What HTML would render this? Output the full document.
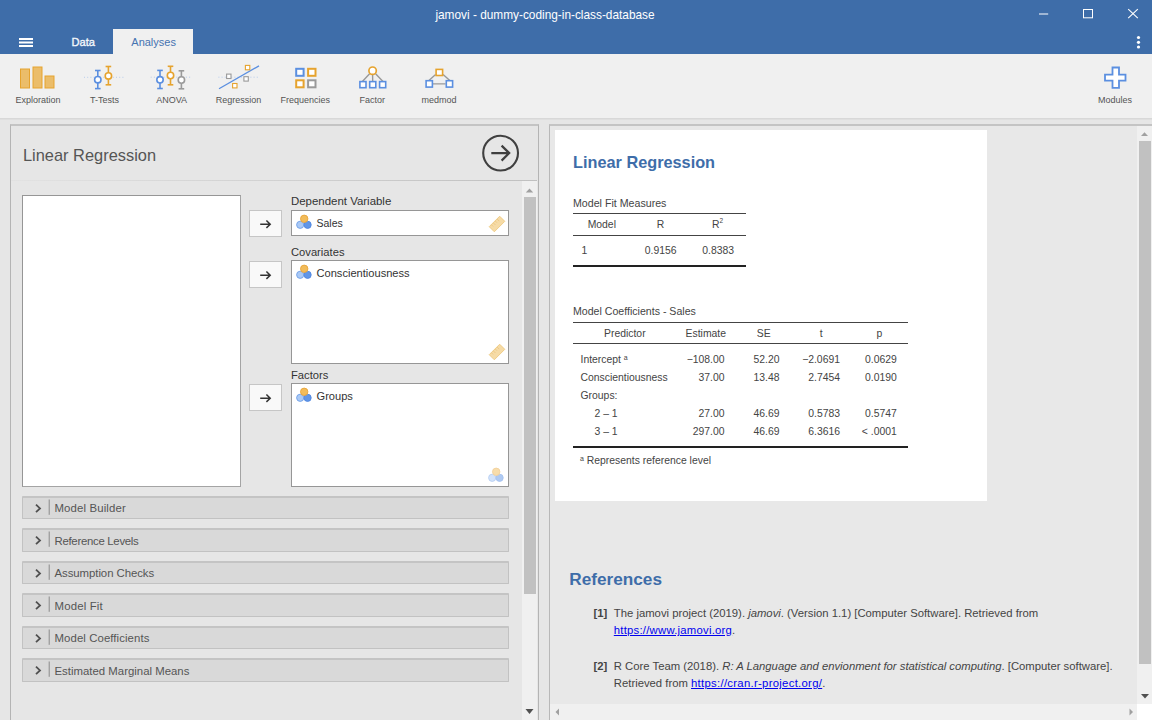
<!DOCTYPE html>
<html><head><meta charset="utf-8"><style>
html,body{margin:0;padding:0;width:1152px;height:720px;overflow:hidden;background:#e6e6e6;font-family:"Liberation Sans", sans-serif}
div,span,svg{position:absolute}
.t{white-space:nowrap;line-height:1}
sup{line-height:0}
</style></head><body>
<div style="left:0px;top:0px;width:1152px;height:54px;background:#3e6da9"></div>
<span class="t" style="left:545px;transform:translateX(-50%);top:9.67px;font-size:11.85px;color:#ffffff;font-weight:400;">jamovi - dummy-coding-in-class-database</span>
<svg style="position:absolute;left:0;top:0" width="1152" height="54"><line x1="1039" y1="14" x2="1048.2" y2="14" stroke="#fff" stroke-width="1"/><rect x="1083.5" y="9.5" width="9" height="8.3" fill="none" stroke="#fff" stroke-width="1"/><line x1="1128.2" y1="9.2" x2="1137.8" y2="18.2" stroke="#fff" stroke-width="1.1"/><line x1="1137.8" y1="9.2" x2="1128.2" y2="18.2" stroke="#fff" stroke-width="1.1"/><rect x="19" y="38" width="14" height="2" fill="#fff"/><rect x="19" y="41.5" width="14" height="2" fill="#fff"/><rect x="19" y="45" width="14" height="2" fill="#fff"/><circle cx="1138.5" cy="37.5" r="1.6" fill="#fff"/><circle cx="1138.5" cy="42.3" r="1.6" fill="#fff"/><circle cx="1138.5" cy="47" r="1.6" fill="#fff"/></svg>
<span class="t" style="left:71.5px;top:37.10px;font-size:11.1px;color:#f4f7fb;font-weight:400;-webkit-text-stroke:0.35px #f4f7fb">Data</span>
<div style="left:113px;top:29px;width:80px;height:25px;background:#f0f0f0"></div>
<span class="t" style="left:131.3px;top:37.19px;font-size:11.0px;color:#4673b0;font-weight:400;">Analyses</span>
<div style="left:0px;top:54px;width:1152px;height:64px;background:#f0f0f0"></div>
<span class="t" style="left:38px;transform:translateX(-50%);top:95.98px;font-size:9.0px;color:#555555;font-weight:400;">Exploration</span>
<span class="t" style="left:104.6px;transform:translateX(-50%);top:95.98px;font-size:9.0px;color:#555555;font-weight:400;">T-Tests</span>
<span class="t" style="left:171.6px;transform:translateX(-50%);top:95.98px;font-size:9.0px;color:#555555;font-weight:400;">ANOVA</span>
<span class="t" style="left:238.6px;transform:translateX(-50%);top:95.98px;font-size:9.0px;color:#555555;font-weight:400;">Regression</span>
<span class="t" style="left:305.3px;transform:translateX(-50%);top:95.98px;font-size:9.0px;color:#555555;font-weight:400;">Frequencies</span>
<span class="t" style="left:372.3px;transform:translateX(-50%);top:95.98px;font-size:9.0px;color:#555555;font-weight:400;">Factor</span>
<span class="t" style="left:439.1px;transform:translateX(-50%);top:95.98px;font-size:9.0px;color:#555555;font-weight:400;">medmod</span>
<span class="t" style="left:1115.1px;transform:translateX(-50%);top:95.98px;font-size:9.0px;color:#555555;font-weight:400;">Modules</span>
<svg style="position:absolute;left:0;top:54px" width="1152" height="64" viewBox="0 54 1152 64"><rect x="20.5" y="69" width="9.0" height="19" fill="#ebbd6a" stroke="#e6a32e" stroke-width="1"/><rect x="33" y="67" width="9" height="21" fill="#ebbd6a" stroke="#e6a32e" stroke-width="1"/><rect x="45" y="76" width="9" height="12" fill="#ebbd6a" stroke="#e6a32e" stroke-width="1"/><line x1="84" y1="77.3" x2="125" y2="77.3" stroke="#a9c3ea" stroke-width="0.8" stroke-dasharray="1 2.2"/><line x1="97.8" y1="70.5" x2="97.8" y2="88.6" stroke="#5b8fe0" stroke-width="1.6"/><line x1="95.0" y1="70.5" x2="100.6" y2="70.5" stroke="#5b8fe0" stroke-width="1.6"/><line x1="95.0" y1="88.6" x2="100.6" y2="88.6" stroke="#5b8fe0" stroke-width="1.6"/><circle cx="97.8" cy="79.7" r="3.2" fill="#fff" stroke="#5b8fe0" stroke-width="1.6"/><line x1="108.4" y1="66.5" x2="108.4" y2="84.8" stroke="#e6a32e" stroke-width="1.6"/><line x1="105.60000000000001" y1="66.5" x2="111.2" y2="66.5" stroke="#e6a32e" stroke-width="1.6"/><line x1="105.60000000000001" y1="84.8" x2="111.2" y2="84.8" stroke="#e6a32e" stroke-width="1.6"/><circle cx="108.4" cy="75.9" r="3.2" fill="#fff" stroke="#e6a32e" stroke-width="1.6"/><line x1="150.7" y1="77.2" x2="192" y2="77.2" stroke="#a9c3ea" stroke-width="0.8" stroke-dasharray="1 2.2"/><line x1="160" y1="70.4" x2="160" y2="88.5" stroke="#5b8fe0" stroke-width="1.6"/><line x1="157.2" y1="70.4" x2="162.8" y2="70.4" stroke="#5b8fe0" stroke-width="1.6"/><line x1="157.2" y1="88.5" x2="162.8" y2="88.5" stroke="#5b8fe0" stroke-width="1.6"/><circle cx="160" cy="79.8" r="3.2" fill="#fff" stroke="#5b8fe0" stroke-width="1.6"/><line x1="170.5" y1="66.3" x2="170.5" y2="84.8" stroke="#e6a32e" stroke-width="1.6"/><line x1="167.7" y1="66.3" x2="173.3" y2="66.3" stroke="#e6a32e" stroke-width="1.6"/><line x1="167.7" y1="84.8" x2="173.3" y2="84.8" stroke="#e6a32e" stroke-width="1.6"/><circle cx="170.5" cy="75.5" r="3.2" fill="#fff" stroke="#e6a32e" stroke-width="1.6"/><line x1="181.4" y1="70.8" x2="181.4" y2="88.8" stroke="#9a9a9a" stroke-width="1.6"/><line x1="178.6" y1="70.8" x2="184.20000000000002" y2="70.8" stroke="#9a9a9a" stroke-width="1.6"/><line x1="178.6" y1="88.8" x2="184.20000000000002" y2="88.8" stroke="#9a9a9a" stroke-width="1.6"/><circle cx="181.4" cy="80" r="3.2" fill="#fff" stroke="#9a9a9a" stroke-width="1.6"/><line x1="218.4" y1="77.2" x2="259.6" y2="77.2" stroke="#a9c3ea" stroke-width="0.8" stroke-dasharray="1 2.2"/><line x1="219" y1="88.7" x2="259" y2="65.9" stroke="#5b8fe0" stroke-width="1.3"/><rect x="245.4" y="65.39999999999999" width="4.4" height="4.4" fill="#fff" stroke="#e6a32e" stroke-width="1.1"/><rect x="226.60000000000002" y="74.1" width="4.4" height="4.4" fill="#fff" stroke="#9a9a9a" stroke-width="1.1"/><rect x="243.9" y="76.7" width="4.4" height="4.4" fill="#fff" stroke="#9a9a9a" stroke-width="1.1"/><rect x="232.60000000000002" y="83.5" width="4.4" height="4.4" fill="#fff" stroke="#e6a32e" stroke-width="1.1"/><rect x="296.2" y="68.8" width="7.4" height="7.0" fill="#fff" stroke="#5b8fe0" stroke-width="2"/><rect x="308.1" y="68.8" width="7.4" height="7.0" fill="#fff" stroke="#e6a32e" stroke-width="2"/><rect x="296.2" y="80.3" width="7.4" height="7.0" fill="#fff" stroke="#e6a32e" stroke-width="2"/><rect x="308.1" y="80.3" width="7.4" height="7.0" fill="#fff" stroke="#9a9a9a" stroke-width="2"/><path d="M369.6 73.8 L362.4 81.5 M372.6 75 L372.7 81.5 M375.6 73.8 L383 81.5" stroke="#999" stroke-width="1.4" fill="none"/><circle cx="372.6" cy="70.7" r="3.7" fill="#fff" stroke="#e6a32e" stroke-width="1.7"/><rect x="359.90000000000003" y="81.6" width="6.1" height="6.1" fill="#fff" stroke="#5b8fe0" stroke-width="1.6"/><rect x="369.7" y="81.6" width="6.1" height="6.1" fill="#fff" stroke="#5b8fe0" stroke-width="1.6"/><rect x="379.6" y="81.6" width="6.1" height="6.1" fill="#fff" stroke="#5b8fe0" stroke-width="1.6"/><path d="M435.6 74.4 L428.9 80.5 M443.1 74.4 L449.8 80.5 M433 83.9 L445.6 83.9" stroke="#999" stroke-width="1.4" fill="none"/><rect x="436.1" y="69.4" width="6.5" height="6.1" fill="#fff" stroke="#e6a32e" stroke-width="1.6"/><rect x="426.1" y="80.7" width="6.3" height="6.4" fill="#fff" stroke="#5b8fe0" stroke-width="1.6"/><rect x="446.3" y="80.7" width="6.3" height="6.4" fill="#fff" stroke="#5b8fe0" stroke-width="1.6"/><path d="M1112.5 67.5 H1119 V74.7 H1125.5 V80.6 H1119 V87.8 H1112.5 V80.6 H1105 V74.7 H1112.5 Z" fill="#fff" stroke="#5b8fe0" stroke-width="1.8"/></svg>
<div style="left:0px;top:118px;width:1152px;height:602px;background:#e6e6e6"></div>
<div style="left:0px;top:118px;width:1152px;height:1px;background:#d8d8d8"></div>
<div style="left:0px;top:119px;width:1152px;height:1px;background:#dfdfdf"></div>
<div style="left:10px;top:124px;width:529px;height:600px;background:#e6e6e6;border:1px solid #b4b4b4;border-top:2px solid #c4c4c4;box-sizing:border-box"></div>
<span class="t" style="left:23px;top:147.12px;font-size:16.4px;color:#555555;font-weight:400;">Linear Regression</span>
<svg style="position:absolute;left:480px;top:133px" width="42" height="42"><circle cx="20.6" cy="20.1" r="17.4" fill="none" stroke="#404040" stroke-width="2.1"/><path d="M11.3 20.1 H29.2 M21.6 12.6 L29.2 20.1 L21.6 27.6" fill="none" stroke="#404040" stroke-width="2.2"/></svg>
<div style="left:11px;top:180px;width:526px;height:1px;background:linear-gradient(to right, #e2e2e2, #c0c0c0)"></div>
<div style="left:522px;top:181px;width:15px;height:543px;background:#f0f0f0"></div>
<div style="left:524px;top:197px;width:12px;height:397px;background:#c1c1c1"></div>
<svg style="position:absolute;left:522px;top:181px" width="15" height="539"><path d="M3.8 11.5 L7.5 7.5 L11.2 11.5 Z" fill="#a0a0a0"/><path d="M3.5 528 L7.5 533 L11.5 528 Z" fill="#505050"/></svg>
<div style="left:22px;top:195px;width:219px;height:292px;background:#fff;border:1px solid #a4a4a4;border-top-color:#969696;border-left-color:#969696;box-sizing:border-box"></div>
<div style="left:249px;top:209.5px;width:33px;height:27px;background:#f9f9f9;border:1px solid #c6c6c6;box-sizing:border-box"></div>
<svg style="position:absolute;left:249px;top:209.5px" width="33" height="27"><path d="M11.2 14.2 H21.2 M17.4 10.5 L21.2 14.2 L17.4 17.9" fill="none" stroke="#333" stroke-width="1.5"/></svg>
<div style="left:249px;top:260.5px;width:33px;height:27px;background:#f9f9f9;border:1px solid #c6c6c6;box-sizing:border-box"></div>
<svg style="position:absolute;left:249px;top:260.5px" width="33" height="27"><path d="M11.2 14.2 H21.2 M17.4 10.5 L21.2 14.2 L17.4 17.9" fill="none" stroke="#333" stroke-width="1.5"/></svg>
<div style="left:249px;top:383.5px;width:33px;height:27px;background:#f9f9f9;border:1px solid #c6c6c6;box-sizing:border-box"></div>
<svg style="position:absolute;left:249px;top:383.5px" width="33" height="27"><path d="M11.2 14.2 H21.2 M17.4 10.5 L21.2 14.2 L17.4 17.9" fill="none" stroke="#333" stroke-width="1.5"/></svg>
<div style="left:291px;top:210px;width:218px;height:26px;background:#fff;border:1px solid #969696;box-sizing:border-box"></div>
<div style="left:291px;top:260px;width:218px;height:104px;background:#fff;border:1px solid #969696;box-sizing:border-box"></div>
<div style="left:291px;top:383px;width:218px;height:104px;background:#fff;border:1px solid #969696;box-sizing:border-box"></div>
<span class="t" style="left:291px;top:196.31px;font-size:11.45px;color:#333;font-weight:400;">Dependent Variable</span>
<span class="t" style="left:291px;top:246.52px;font-size:11.2px;color:#333;font-weight:400;">Covariates</span>
<span class="t" style="left:291px;top:369.52px;font-size:11.2px;color:#333;font-weight:400;">Factors</span>
<svg style="position:absolute;left:295px;top:212.5px;opacity:1" width="18" height="18"><circle cx="5.2" cy="11.8" r="3.6" fill="#a9c9f6" stroke="#6f9fe6" stroke-width="0.9"/><circle cx="12.6" cy="11.8" r="3.6" fill="#6196e6" stroke="#4f86e0" stroke-width="0.9"/><circle cx="9.2" cy="5.8" r="3.7" fill="#f2bc5a" stroke="#e6a43a" stroke-width="0.9"/></svg>
<span class="t" style="left:316.5px;top:218.11px;font-size:10.5px;color:#333;font-weight:400;">Sales</span>
<svg style="position:absolute;left:295px;top:262.8px;opacity:1" width="18" height="18"><circle cx="5.2" cy="11.8" r="3.6" fill="#a9c9f6" stroke="#6f9fe6" stroke-width="0.9"/><circle cx="12.6" cy="11.8" r="3.6" fill="#6196e6" stroke="#4f86e0" stroke-width="0.9"/><circle cx="9.2" cy="5.8" r="3.7" fill="#f2bc5a" stroke="#e6a43a" stroke-width="0.9"/></svg>
<span class="t" style="left:316.5px;top:267.80px;font-size:11.1px;color:#333;font-weight:400;">Conscientiousness</span>
<svg style="position:absolute;left:295px;top:386px;opacity:1" width="18" height="18"><circle cx="5.2" cy="11.8" r="3.6" fill="#a9c9f6" stroke="#6f9fe6" stroke-width="0.9"/><circle cx="12.6" cy="11.8" r="3.6" fill="#6196e6" stroke="#4f86e0" stroke-width="0.9"/><circle cx="9.2" cy="5.8" r="3.7" fill="#f2bc5a" stroke="#e6a43a" stroke-width="0.9"/></svg>
<span class="t" style="left:316.5px;top:390.60px;font-size:11.1px;color:#333;font-weight:400;">Groups</span>
<svg style="position:absolute;left:487.2px;top:214.3px" width="20" height="20"><g transform="rotate(-45 10 10)"><rect x="2.6" y="6.4" width="14.8" height="7.2" fill="#f6dba6" stroke="#eecb84" stroke-width="0.9"/><path d="M5.5 6.6 V9 M8.2 6.6 V9.6 M10.9 6.6 V9 M13.6 6.6 V9.6" stroke="#e9c27a" stroke-width="0.7"/></g></svg>
<svg style="position:absolute;left:487.2px;top:342.4px" width="20" height="20"><g transform="rotate(-45 10 10)"><rect x="2.6" y="6.4" width="14.8" height="7.2" fill="#f6dba6" stroke="#eecb84" stroke-width="0.9"/><path d="M5.5 6.6 V9 M8.2 6.6 V9.6 M10.9 6.6 V9 M13.6 6.6 V9.6" stroke="#e9c27a" stroke-width="0.7"/></g></svg>
<svg style="position:absolute;left:487.4px;top:466.4px;opacity:0.5" width="18" height="18"><circle cx="5.2" cy="11.8" r="3.6" fill="#a9c9f6" stroke="#6f9fe6" stroke-width="0.9"/><circle cx="12.6" cy="11.8" r="3.6" fill="#6196e6" stroke="#4f86e0" stroke-width="0.9"/><circle cx="9.2" cy="5.8" r="3.7" fill="#f2bc5a" stroke="#e6a43a" stroke-width="0.9"/></svg>
<div style="left:22px;top:495.5px;width:487px;height:23.5px;background:#d9d9d9;border:1.5px solid #c2c2c2;border-top:2px solid #c4c4c4;box-sizing:border-box;border-radius:1px"></div>
<svg style="position:absolute;left:30px;top:495.5px" width="24" height="23"><path d="M6 8.6 L10 12.4 L6 16.2" fill="none" stroke="#505050" stroke-width="1.8"/><line x1="19.2" y1="3.5" x2="19.2" y2="18.8" stroke="#8a8a8a" stroke-width="1"/></svg>
<span class="t" style="left:54.5px;top:503.15px;font-size:11.4px;color:#555555;font-weight:400;letter-spacing:0.13px">Model Builder</span>
<div style="left:22px;top:528.0px;width:487px;height:23.5px;background:#d9d9d9;border:1.5px solid #c2c2c2;border-top:2px solid #c4c4c4;box-sizing:border-box;border-radius:1px"></div>
<svg style="position:absolute;left:30px;top:528.0px" width="24" height="23"><path d="M6 8.6 L10 12.4 L6 16.2" fill="none" stroke="#505050" stroke-width="1.8"/><line x1="19.2" y1="3.5" x2="19.2" y2="18.8" stroke="#8a8a8a" stroke-width="1"/></svg>
<span class="t" style="left:54.5px;top:535.70px;font-size:11.4px;color:#555555;font-weight:400;letter-spacing:-0.29px">Reference Levels</span>
<div style="left:22px;top:560.6px;width:487px;height:23.5px;background:#d9d9d9;border:1.5px solid #c2c2c2;border-top:2px solid #c4c4c4;box-sizing:border-box;border-radius:1px"></div>
<svg style="position:absolute;left:30px;top:560.6px" width="24" height="23"><path d="M6 8.6 L10 12.4 L6 16.2" fill="none" stroke="#505050" stroke-width="1.8"/><line x1="19.2" y1="3.5" x2="19.2" y2="18.8" stroke="#8a8a8a" stroke-width="1"/></svg>
<span class="t" style="left:54.5px;top:568.25px;font-size:11.4px;color:#555555;font-weight:400;letter-spacing:-0.06px">Assumption Checks</span>
<div style="left:22px;top:593.1px;width:487px;height:23.5px;background:#d9d9d9;border:1.5px solid #c2c2c2;border-top:2px solid #c4c4c4;box-sizing:border-box;border-radius:1px"></div>
<svg style="position:absolute;left:30px;top:593.1px" width="24" height="23"><path d="M6 8.6 L10 12.4 L6 16.2" fill="none" stroke="#505050" stroke-width="1.8"/><line x1="19.2" y1="3.5" x2="19.2" y2="18.8" stroke="#8a8a8a" stroke-width="1"/></svg>
<span class="t" style="left:54.5px;top:600.80px;font-size:11.4px;color:#555555;font-weight:400;letter-spacing:0.17px">Model Fit</span>
<div style="left:22px;top:625.7px;width:487px;height:23.5px;background:#d9d9d9;border:1.5px solid #c2c2c2;border-top:2px solid #c4c4c4;box-sizing:border-box;border-radius:1px"></div>
<svg style="position:absolute;left:30px;top:625.7px" width="24" height="23"><path d="M6 8.6 L10 12.4 L6 16.2" fill="none" stroke="#505050" stroke-width="1.8"/><line x1="19.2" y1="3.5" x2="19.2" y2="18.8" stroke="#8a8a8a" stroke-width="1"/></svg>
<span class="t" style="left:54.5px;top:633.35px;font-size:11.4px;color:#555555;font-weight:400;letter-spacing:0.08px">Model Coefficients</span>
<div style="left:22px;top:658.2px;width:487px;height:23.5px;background:#d9d9d9;border:1.5px solid #c2c2c2;border-top:2px solid #c4c4c4;box-sizing:border-box;border-radius:1px"></div>
<svg style="position:absolute;left:30px;top:658.2px" width="24" height="23"><path d="M6 8.6 L10 12.4 L6 16.2" fill="none" stroke="#505050" stroke-width="1.8"/><line x1="19.2" y1="3.5" x2="19.2" y2="18.8" stroke="#8a8a8a" stroke-width="1"/></svg>
<span class="t" style="left:54.5px;top:665.90px;font-size:11.4px;color:#555555;font-weight:400;letter-spacing:0px">Estimated Marginal Means</span>
<div style="left:549px;top:124px;width:603px;height:600px;background:#e8e8e8;border-left:1px solid #b8b8b8;border-top:2px solid #c4c4c4;box-sizing:border-box"></div>
<div style="left:555px;top:130px;width:432px;height:371px;background:#fff"></div>
<span class="t" style="left:573px;top:154.40px;font-size:16.3px;color:#3e6da9;font-weight:700;">Linear Regression</span>
<span class="t" style="left:573px;top:197.98px;font-size:10.65px;color:#444;font-weight:400;">Model Fit Measures</span>
<div style="left:573px;top:213px;width:173px;height:1px;background:#444"></div>
<span class="t" style="left:601.8px;transform:translateX(-50%);top:219.60px;font-size:10.4px;color:#444;font-weight:400;">Model</span>
<span class="t" style="left:660.5px;transform:translateX(-50%);top:219.60px;font-size:10.4px;color:#444;font-weight:400;">R</span>
<span class="t" style="left:717.5px;transform:translateX(-50%);top:219.60px;font-size:10.4px;color:#444;font-weight:400;">R<sup style="font-size:6.5px;vertical-align:5.5px">2</sup></span>
<div style="left:573px;top:235px;width:173px;height:1px;background:#444"></div>
<span class="t" style="left:581.5px;top:246.20px;font-size:10.4px;color:#444;font-weight:400;">1</span>
<span class="t" style="right:475.4px;top:246.20px;font-size:10.4px;color:#444;font-weight:400;">0.9156</span>
<span class="t" style="right:418px;top:246.20px;font-size:10.4px;color:#444;font-weight:400;">0.8383</span>
<div style="left:573px;top:264.5px;width:173px;height:2px;background:#222"></div>
<span class="t" style="left:573px;top:306.03px;font-size:10.6px;color:#444;font-weight:400;">Model Coefficients - Sales</span>
<div style="left:573px;top:321.5px;width:335px;height:1px;background:#444"></div>
<span class="t" style="left:624.8px;transform:translateX(-50%);top:329.00px;font-size:10.4px;color:#444;font-weight:400;">Predictor</span>
<span class="t" style="left:705.8px;transform:translateX(-50%);top:329.00px;font-size:10.4px;color:#444;font-weight:400;">Estimate</span>
<span class="t" style="left:763.8px;transform:translateX(-50%);top:329.00px;font-size:10.4px;color:#444;font-weight:400;">SE</span>
<span class="t" style="left:821.3px;transform:translateX(-50%);top:329.00px;font-size:10.4px;color:#444;font-weight:400;">t</span>
<span class="t" style="left:879.3px;transform:translateX(-50%);top:329.00px;font-size:10.4px;color:#444;font-weight:400;">p</span>
<div style="left:573px;top:343px;width:335px;height:1px;background:#444"></div>
<span class="t" style="left:580.5px;top:355.10px;font-size:10.4px;color:#444;font-weight:400;">Intercept <sup style="font-size:7px;vertical-align:3px">a</sup></span>
<span class="t" style="right:427.5px;top:355.10px;font-size:10.4px;color:#444;font-weight:400;">−108.00</span>
<span class="t" style="right:372.5px;top:355.10px;font-size:10.4px;color:#444;font-weight:400;">52.20</span>
<span class="t" style="right:312px;top:355.10px;font-size:10.4px;color:#444;font-weight:400;">−2.0691</span>
<span class="t" style="right:255.20000000000005px;top:355.10px;font-size:10.4px;color:#444;font-weight:400;">0.0629</span>
<span class="t" style="left:580.5px;top:373.10px;font-size:10.4px;color:#444;font-weight:400;">Conscientiousness</span>
<span class="t" style="right:427.5px;top:373.10px;font-size:10.4px;color:#444;font-weight:400;">37.00</span>
<span class="t" style="right:372.5px;top:373.10px;font-size:10.4px;color:#444;font-weight:400;">13.48</span>
<span class="t" style="right:312px;top:373.10px;font-size:10.4px;color:#444;font-weight:400;">2.7454</span>
<span class="t" style="right:255.20000000000005px;top:373.10px;font-size:10.4px;color:#444;font-weight:400;">0.0190</span>
<span class="t" style="left:580.5px;top:391.10px;font-size:10.4px;color:#444;font-weight:400;">Groups:</span>
<span class="t" style="left:594.5px;top:409.10px;font-size:10.4px;color:#444;font-weight:400;">2 – 1</span>
<span class="t" style="right:427.5px;top:409.10px;font-size:10.4px;color:#444;font-weight:400;">27.00</span>
<span class="t" style="right:372.5px;top:409.10px;font-size:10.4px;color:#444;font-weight:400;">46.69</span>
<span class="t" style="right:312px;top:409.10px;font-size:10.4px;color:#444;font-weight:400;">0.5783</span>
<span class="t" style="right:255.20000000000005px;top:409.10px;font-size:10.4px;color:#444;font-weight:400;">0.5747</span>
<span class="t" style="left:594.5px;top:427.10px;font-size:10.4px;color:#444;font-weight:400;">3 – 1</span>
<span class="t" style="right:427.5px;top:427.10px;font-size:10.4px;color:#444;font-weight:400;">297.00</span>
<span class="t" style="right:372.5px;top:427.10px;font-size:10.4px;color:#444;font-weight:400;">46.69</span>
<span class="t" style="right:312px;top:427.10px;font-size:10.4px;color:#444;font-weight:400;">6.3616</span>
<span class="t" style="right:255.20000000000005px;top:427.10px;font-size:10.4px;color:#444;font-weight:400;">&lt; .0001</span>
<div style="left:573px;top:445.5px;width:335px;height:2px;background:#222"></div>
<span class="t" style="left:580px;top:455.70px;font-size:10.4px;color:#444;font-weight:400;"><sup style="font-size:7px;vertical-align:3px">a</sup> Represents reference level</span>
<span class="t" style="left:569.3px;top:570.74px;font-size:17.2px;color:#3e6da9;font-weight:700;">References</span>
<span class="t" style="left:593.4px;top:607.73px;font-size:11.3px;color:#444;font-weight:700;">[1]</span>
<span class="t" style="left:613.8px;top:607.73px;font-size:11.3px;color:#444;font-weight:400;">The jamovi project (2019). <i>jamovi</i>. (Version 1.1) [Computer Software]. Retrieved from</span>
<span class="t" style="left:613.8px;top:624.93px;font-size:11.3px;color:#444;font-weight:400;"><u style="color:#0000ee;letter-spacing:0.24px">https://www.jamovi.org</u>.</span>
<span class="t" style="left:593.4px;top:661.23px;font-size:11.3px;color:#444;font-weight:700;">[2]</span>
<span class="t" style="left:613.8px;top:661.23px;font-size:11.3px;color:#444;font-weight:400;">R Core Team (2018). <i>R: A Language and envionment for statistical computing</i>. [Computer software].</span>
<span class="t" style="left:613.8px;top:678.23px;font-size:11.3px;color:#444;font-weight:400;">Retrieved from <u style="color:#0000ee;letter-spacing:0.3px">https://cran.r-project.org/</u>.</span>
<div style="left:1137px;top:126px;width:15px;height:578px;background:#f0f0f0"></div>
<div style="left:1139px;top:141px;width:12px;height:523px;background:#c1c1c1"></div>
<div style="left:550px;top:704px;width:587px;height:16px;background:#f0f0f0"></div>
<div style="left:1137px;top:704px;width:15px;height:16px;background:#ffffff"></div>
<svg style="position:absolute;left:0;top:0" width="1152" height="720"><path d="M1141 136 L1144.5 132.3 L1148 136 Z" fill="#a0a0a0"/><path d="M1141 694 L1145 698.5 L1149 694 Z" fill="#505050"/><path d="M559 708.5 L555.5 712 L559 715.5 Z" fill="#a0a0a0"/><path d="M1129.5 708.5 L1133 712 L1129.5 715.5 Z" fill="#a0a0a0"/></svg>
</body></html>
